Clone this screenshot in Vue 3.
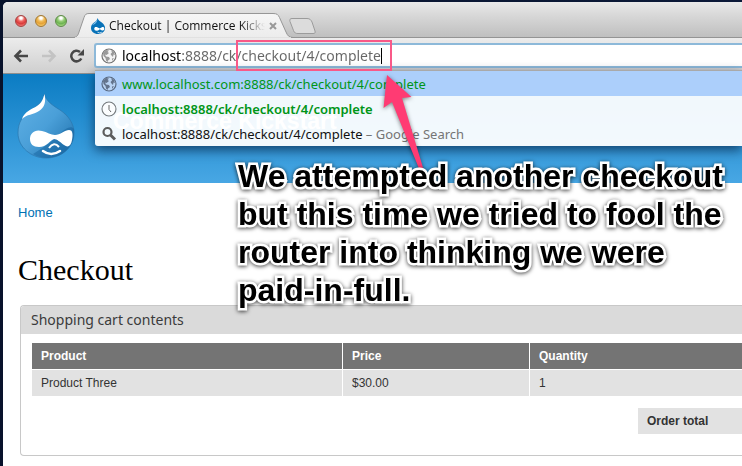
<script setup>
import { ref } from 'vue'

const address = ref('localhost:8888/ck/checkout/4/complete')
const items = [{ product: 'Product Three', price: '$30.00', quantity: '1' }]
</script>

<template>
  <div class="desktop">
    <div class="window">
      <header class="tabstrip">
        <div class="lights">
          <button class="light red" aria-label="Close window"></button>
          <button class="light yellow" aria-label="Minimize window"></button>
          <button class="light green" aria-label="Zoom window"></button>
        </div>
        <div class="tab">
          <svg class="tab-shape" viewBox="0 0 220 25" aria-hidden="true">
            <defs>
              <linearGradient id="tabfill" x1="0" y1="0" x2="0" y2="1">
                <stop offset="0" stop-color="#f6f6f6" />
                <stop offset="1" stop-color="#ececec" />
              </linearGradient>
            </defs>
            <path d="M0 24.5C4 24.5 5 22 6 19L11 4.500C12 1.500 13 .5 16 .5H200C204 .5 205 1.500 206.500 4.500L213 19C214.500 22.500 216 24.500 220 24.500" fill="url(#tabfill)" stroke="#969696" />
            <path d="M2 25H218" stroke="#ececec" stroke-width="1.500" />
          </svg>
          <svg class="favicon" viewBox="0 0 56 64" aria-hidden="true">
            <path d="M26 0C28 8 35 12 43 18C52 25 56 32 56 40C56 54 44 64 28 64S0 54 0 40C0 29 6 22 14 17C20 13 25 8 26 0Z" fill="#0872b8" />
            <path d="M5 29C8 21 22 18 25 5C26 18 16 24 5 29Z" fill="#8dc5eb" />
            <path d="M13 42C13 33 25 34 35 42C44 34 53 33 53 42C53 52 46 52 35 45C25 54 13 53 13 42Z" fill="#fff" />
            <path d="M26 57Q35 63 43 57" stroke="#fff" stroke-width="3" fill="none" />
          </svg>
          <span class="tab-title">Checkout | Commerce Kickst</span>
          <button class="tab-close" aria-label="Close tab">
            <svg viewBox="0 0 8 8"><path d="M1 1L7 7M7 1L1 7" stroke="#999" stroke-width="2" /></svg>
          </button>
        </div>
        <button class="new-tab" aria-label="New tab">
          <svg viewBox="0 0 27 17">
            <path d="M3 .5H18C21 .5 22 2 23 4L26 13C26.500 15 26 15.500 24 15.500H9C6.500 15.500 5.500 15 4.500 12.500L1 3.500C.5 1.500 1 .5 3 .5Z" fill="#dcdcdc" stroke="#9b9b9b" />
          </svg>
        </button>
      </header>

      <div class="toolbar">
        <nav class="nav" aria-label="Browser">
          <button aria-label="Back">
            <svg viewBox="0 0 16 14"><path d="M8 1.500L2.500 7L8 12.500M3 7H15" fill="none" stroke="#474747" stroke-width="2.600" /></svg>
          </button>
          <button aria-label="Forward">
            <svg viewBox="0 0 16 14"><path d="M8 1.500L13.500 7L8 12.500M13 7H1" fill="none" stroke="#c3c3c3" stroke-width="2.600" /></svg>
          </button>
          <button aria-label="Reload">
            <svg viewBox="0 0 16 14"><path d="M12.300 9.500A5.300 5.300 0 1 1 11 3" fill="none" stroke="#474747" stroke-width="2.500" /><path d="M15 0V6.500H8.500Z" fill="#474747" /></svg>
          </button>
        </nav>

        <div class="omnibox">
          <div class="field">
            <svg class="globe" viewBox="0 0 16 16" aria-hidden="true">
              <circle cx="8" cy="8" r="7" fill="#f4f4f4" stroke="#747474" stroke-width="1.200" />
              <path d="M2 5L5 2L8 2.500L6.500 4L8 5L5.500 7L4 6.500L5 8.500L8 9L9 11L7 12.500L6.500 14L5 12.500L4.500 10L2.500 8Z M10 2L13 4L14 7L12.500 6.500L12 9L10.500 7.500L9.500 6L11 4.500Z M11 10.500L13 10L11 13Z" fill="#999" />
            </svg>
            <input v-model="address" class="address" type="text" aria-label="Address" spellcheck="false" />
            <span class="caret"></span>
          </div>
          <ul class="suggestions">
            <li class="selected">
              <svg class="globe" viewBox="0 0 16 16" aria-hidden="true">
                <circle cx="8" cy="8" r="7" fill="#b9d3f3" stroke="#596a83" stroke-width="1.200" />
                <path d="M2 5L5 2L8 2.500L6.500 4L8 5L5.500 7L4 6.500L5 8.500L8 9L9 11L7 12.500L6.500 14L5 12.500L4.500 10L2.500 8Z M10 2L13 4L14 7L12.500 6.500L12 9L10.500 7.500L9.500 6L11 4.500Z M11 10.500L13 10L11 13Z" fill="#63738c" />
              </svg>
              <a href="#" class="url">www.localhost.com:8888/ck/checkout/4/complete</a>
            </li>
            <li>
              <svg class="globe" viewBox="0 0 16 16" aria-hidden="true">
                <circle cx="8" cy="8" r="7" fill="#fbfdfe" stroke="#757a7d" stroke-width="1.100" />
                <path d="M8 4V8.500L10 11" fill="none" stroke="#666" />
              </svg>
              <a href="#" class="url match">localhost:8888/ck/checkout/4/complete</a>
            </li>
            <li>
              <svg class="globe" viewBox="0 0 16 16" aria-hidden="true">
                <circle cx="6.500" cy="6" r="4" fill="none" stroke="#5c5c5c" stroke-width="2.200" />
                <path d="M9.500 9L14 13.500" stroke="#5c5c5c" stroke-width="3" />
              </svg>
              <a href="#" class="query">localhost:8888/ck/checkout/4/complete <span>– Google Search</span></a>
            </li>
          </ul>
          <span class="highlight"></span>
        </div>
      </div>

      <div class="banner">
        <svg class="druplicon" viewBox="0 0 58 66" aria-hidden="true">
          <defs>
            <linearGradient id="drop" x1="0" y1="0" x2="1" y2="1">
              <stop offset="0" stop-color="#62b2e6" />
              <stop offset=".5" stop-color="#4a9fd8" />
              <stop offset="1" stop-color="#1b6ca8" />
            </linearGradient>
          </defs>
          <path d="M27.500 1C29 8 35 12 43 17C52 23 57 31 57 40C57 55 44 65 29 65S1 54 1 40C1 29 6 22 14 17C21 13 26 8 27.500 1Z" fill="url(#drop)" stroke="#2c78ae" stroke-opacity=".7" />
          <path d="M57 36C54 32 48 36 44 40C38 46 28 54 16 61C24 66 36 66 45 61C54 55 58 46 57 36Z" fill="#12609c" opacity=".45" />
          <path d="M5 26C7 19 15 16 20 13C25 10 26 6 27.500 1C29 9 28 14 22 18C16 22 10 21 5 26Z" fill="#fff" />
          <path d="M13 46C13 40 18 36 25 38C30 39 34 42 38 42C43 42 48 37 52 37C56 37 56 42 55 47C54 53 51 55 47 52C43 49 40 46 37 46C33 47 30 54 22 54C16 54 13 51 13 46Z" fill="#fff" />
          <path d="M32 55Q37 48 42 54" fill="none" stroke="#fff" stroke-width="2" />
          <path d="M26 58Q34 64 43 58" fill="none" stroke="#fff" stroke-width="2.500" stroke-linecap="round" />
        </svg>
        <span class="site-name">Commerce Kickstart</span>
      </div>

      <main class="page">
        <a href="#" class="crumb">Home</a>
        <h1>Checkout</h1>
        <section class="panel">
          <h2>Shopping cart contents</h2>
          <div class="panel-body">
            <table class="cart">
              <colgroup><col class="c-product" /><col class="c-price" /><col /></colgroup>
              <thead>
                <tr><th>Product</th><th>Price</th><th>Quantity</th></tr>
              </thead>
              <tbody>
                <tr v-for="item in items" :key="item.product">
                  <td>{{ item.product }}</td><td>{{ item.price }}</td><td>{{ item.quantity }}</td>
                </tr>
              </tbody>
            </table>
            <div class="total">Order total</div>
          </div>
        </section>
      </main>
    </div>

    <div class="note">
      <svg class="arrow" viewBox="0 0 46 104" aria-hidden="true">
        <path d="M6 3L2.500 36L11 30L39 99L43 99L21 26L30.500 25Z" fill="#ff3b73" />
      </svg>
      <p>We attempted another checkout<br />but this time we tried to fool the<br />router into thinking we were<br />paid-in-full.</p>
    </div>
  </div>
</template>

<style>
body { margin: 0; background: #0a1530; }
</style>

<style scoped>
* { box-sizing: border-box; }
button { border: 0; padding: 0; background: none; display: block; }
svg { display: block; }
a { text-decoration: none; }

.desktop {
  position: relative;
  min-height: 100vh;
  padding: 2px 0 0 3px;
  display: flex;
  overflow: hidden;
  background: linear-gradient(90deg, #08122b, #0b1938);
}
.window {
  flex: 1;
  min-width: 0;
  background: #fff;
  border-radius: 5px 0 0 0;
  overflow: hidden;
}

.tabstrip {
  height: 36px;
  display: flex;
  align-items: flex-end;
  padding-left: 12px;
  background: linear-gradient(#e9e9e9, #d7d7d7 40%, #bfbfbf);
  border-bottom: 1px solid #949494;
}
.lights { display: flex; gap: 8px; padding-bottom: 10px; }
.light { width: 12px; height: 12px; border-radius: 50%; border: 1px solid; }
.red { background: radial-gradient(circle at 50% 20%, #fff 0 12%, #ef6763 35%, #d93b3b 60%, #ff9c94); border-color: #a34242; }
.yellow { background: radial-gradient(circle at 50% 20%, #fff 0 12%, #f0bd5a 35%, #e5a136 60%, #ffe58a); border-color: #a17733; }
.green { background: radial-gradient(circle at 50% 20%, #fff 0 12%, #97ce77 35%, #6db351 60%, #c8f0a0); border-color: #5c8a48; }
.tab {
  position: relative;
  width: 220px;
  height: 25px;
  margin: 0 0 -1px 6px;
  padding: 0 16px 0 18px;
  display: flex;
  align-items: center;
  gap: 4px;
}
.tab-shape { position: absolute; left: 0; top: 0; width: 100%; height: 100%; }
.favicon { position: relative; width: 14px; height: 16px; flex: none; }
.tab-title {
  position: relative;
  flex: 1;
  min-width: 0;
  white-space: nowrap;
  font: 12px/18px "Open Sans", sans-serif;
  color: #111;
  -webkit-mask-image: linear-gradient(90deg, #000 84%, transparent);
  mask-image: linear-gradient(90deg, #000 84%, transparent);
}
.tab-close { position: relative; width: 8px; height: 8px; flex: none; }
.new-tab { width: 27px; height: 17px; margin: 0 0 2px -4px; }

.toolbar {
  height: 36px;
  display: flex;
  padding: 5px 0 5px 10px;
  gap: 10px;
  background: linear-gradient(#ececec, #cfcfcf);
  border-bottom: 1px solid #8e8e8e;
}
.nav { display: flex; align-items: center; gap: 12px; width: 71px; }
.nav svg { width: 16px; height: 14px; }
.omnibox { position: relative; flex: 1; }
.field {
  height: 25px;
  display: flex;
  align-items: center;
  padding-left: 5px;
  background: #fff;
  border: 2px solid #8db9d9;
  border-right: 0;
  border-radius: 3px 0 0 3px;
}
.globe { width: 16px; height: 16px; margin-right: 5px; flex: none; }
.address {
  field-sizing: content;
  border: 0;
  padding: 0;
  outline: 0;
  font: 14px/20px "Noto Sans", sans-serif;
  color: transparent;
  background: linear-gradient(90deg, #000 59px, #666 59px);
  -webkit-background-clip: text;
  background-clip: text;
}
.caret { width: 1px; height: 16px; background: #000; }
.suggestions {
  position: absolute;
  z-index: 2;
  top: 27px;
  left: 1px;
  right: 0;
  margin: 0;
  padding: 0;
  list-style: none;
  background: rgba(255, 255, 255, 0.94);
  border-top: 1px solid #a9a9a9;
  border-radius: 0 0 0 3px;
  box-shadow: 0 4px 12px rgba(0, 20, 50, 0.65);
}
.suggestions li { height: 25px; display: flex; align-items: center; padding-left: 6px; font: 13px/24px "Noto Sans", sans-serif; }
.selected { background: #accffb; }
.url { color: #009517; }
.match { font-weight: 600; }
.query { color: #111; }
.query span { color: #757575; }
.highlight {
  position: absolute;
  z-index: 3;
  left: 142px;
  top: -3px;
  width: 156px;
  height: 31px;
  border: 2px solid #f95988;
}

.banner {
  height: 109px;
  display: flex;
  align-items: flex-start;
  gap: 38px;
  padding: 19px 0 0 14px;
  background: linear-gradient(#0b7cc3, #48a7e4);
}
.druplicon { width: 58px; height: 66px; }
.site-name { padding-top: 14px; font: bold 23px/28px "Liberation Sans", Arial, sans-serif; color: #fff; }

.page { padding: 20px 0 11px 15px; font: 12px/18px "Liberation Sans", Arial, sans-serif; color: #333; }
.crumb { display: block; font-size: 13px; line-height: 20px; color: #0071b3; }
h1 { margin: 27px 0 15px; font: 30px/40px "Liberation Serif", Georgia, serif; color: #000; }
.panel {
  margin-left: 2px;
  border: 1px solid #c8c8c8;
  border-right: 0;
  border-radius: 4px 0 0 4px;
  overflow: hidden;
}
h2 { margin: 0; padding: 0 10px; font: 14px/28px "Noto Sans", sans-serif; color: #3b3b3b; background: #dadada; }
.panel-body { padding: 9px 0 21px 11px; display: flex; flex-direction: column; }
.cart { width: 100%; table-layout: fixed; border-collapse: separate; border-spacing: 0; }
.c-product { width: 311px; }
.c-price { width: 187px; }
th, td { height: 26px; padding: 0 9px; text-align: left; border-right: 1px solid #fff; }
th:last-child, td:last-child { border-right: 0; }
th { height: 27px; background: #747474; color: #fff; border-bottom: 1px solid #fff; }
td { background: #e2e2e2; }
.total { align-self: flex-end; width: 104px; margin-top: 12px; padding: 4px 9px; font-weight: bold; background: #e2e2e2; }

.note { position: absolute; left: 238px; top: 157px; z-index: 4; pointer-events: none; }
.arrow { position: absolute; left: 143px; top: -85px; width: 46px; height: 104px; filter: drop-shadow(0 1px 2px rgba(0, 0, 0, 0.5)); }
.note p {
  position: relative;
  margin: 0;
  white-space: nowrap;
  font: bold 32px/38px "Liberation Sans", Arial, sans-serif;
  color: #000;
  -webkit-text-stroke: 5px #fff;
  paint-order: stroke fill;
  stroke-linejoin: round;
  filter: drop-shadow(0 1px 2px rgba(0, 0, 0, 0.75));
}
</style>
